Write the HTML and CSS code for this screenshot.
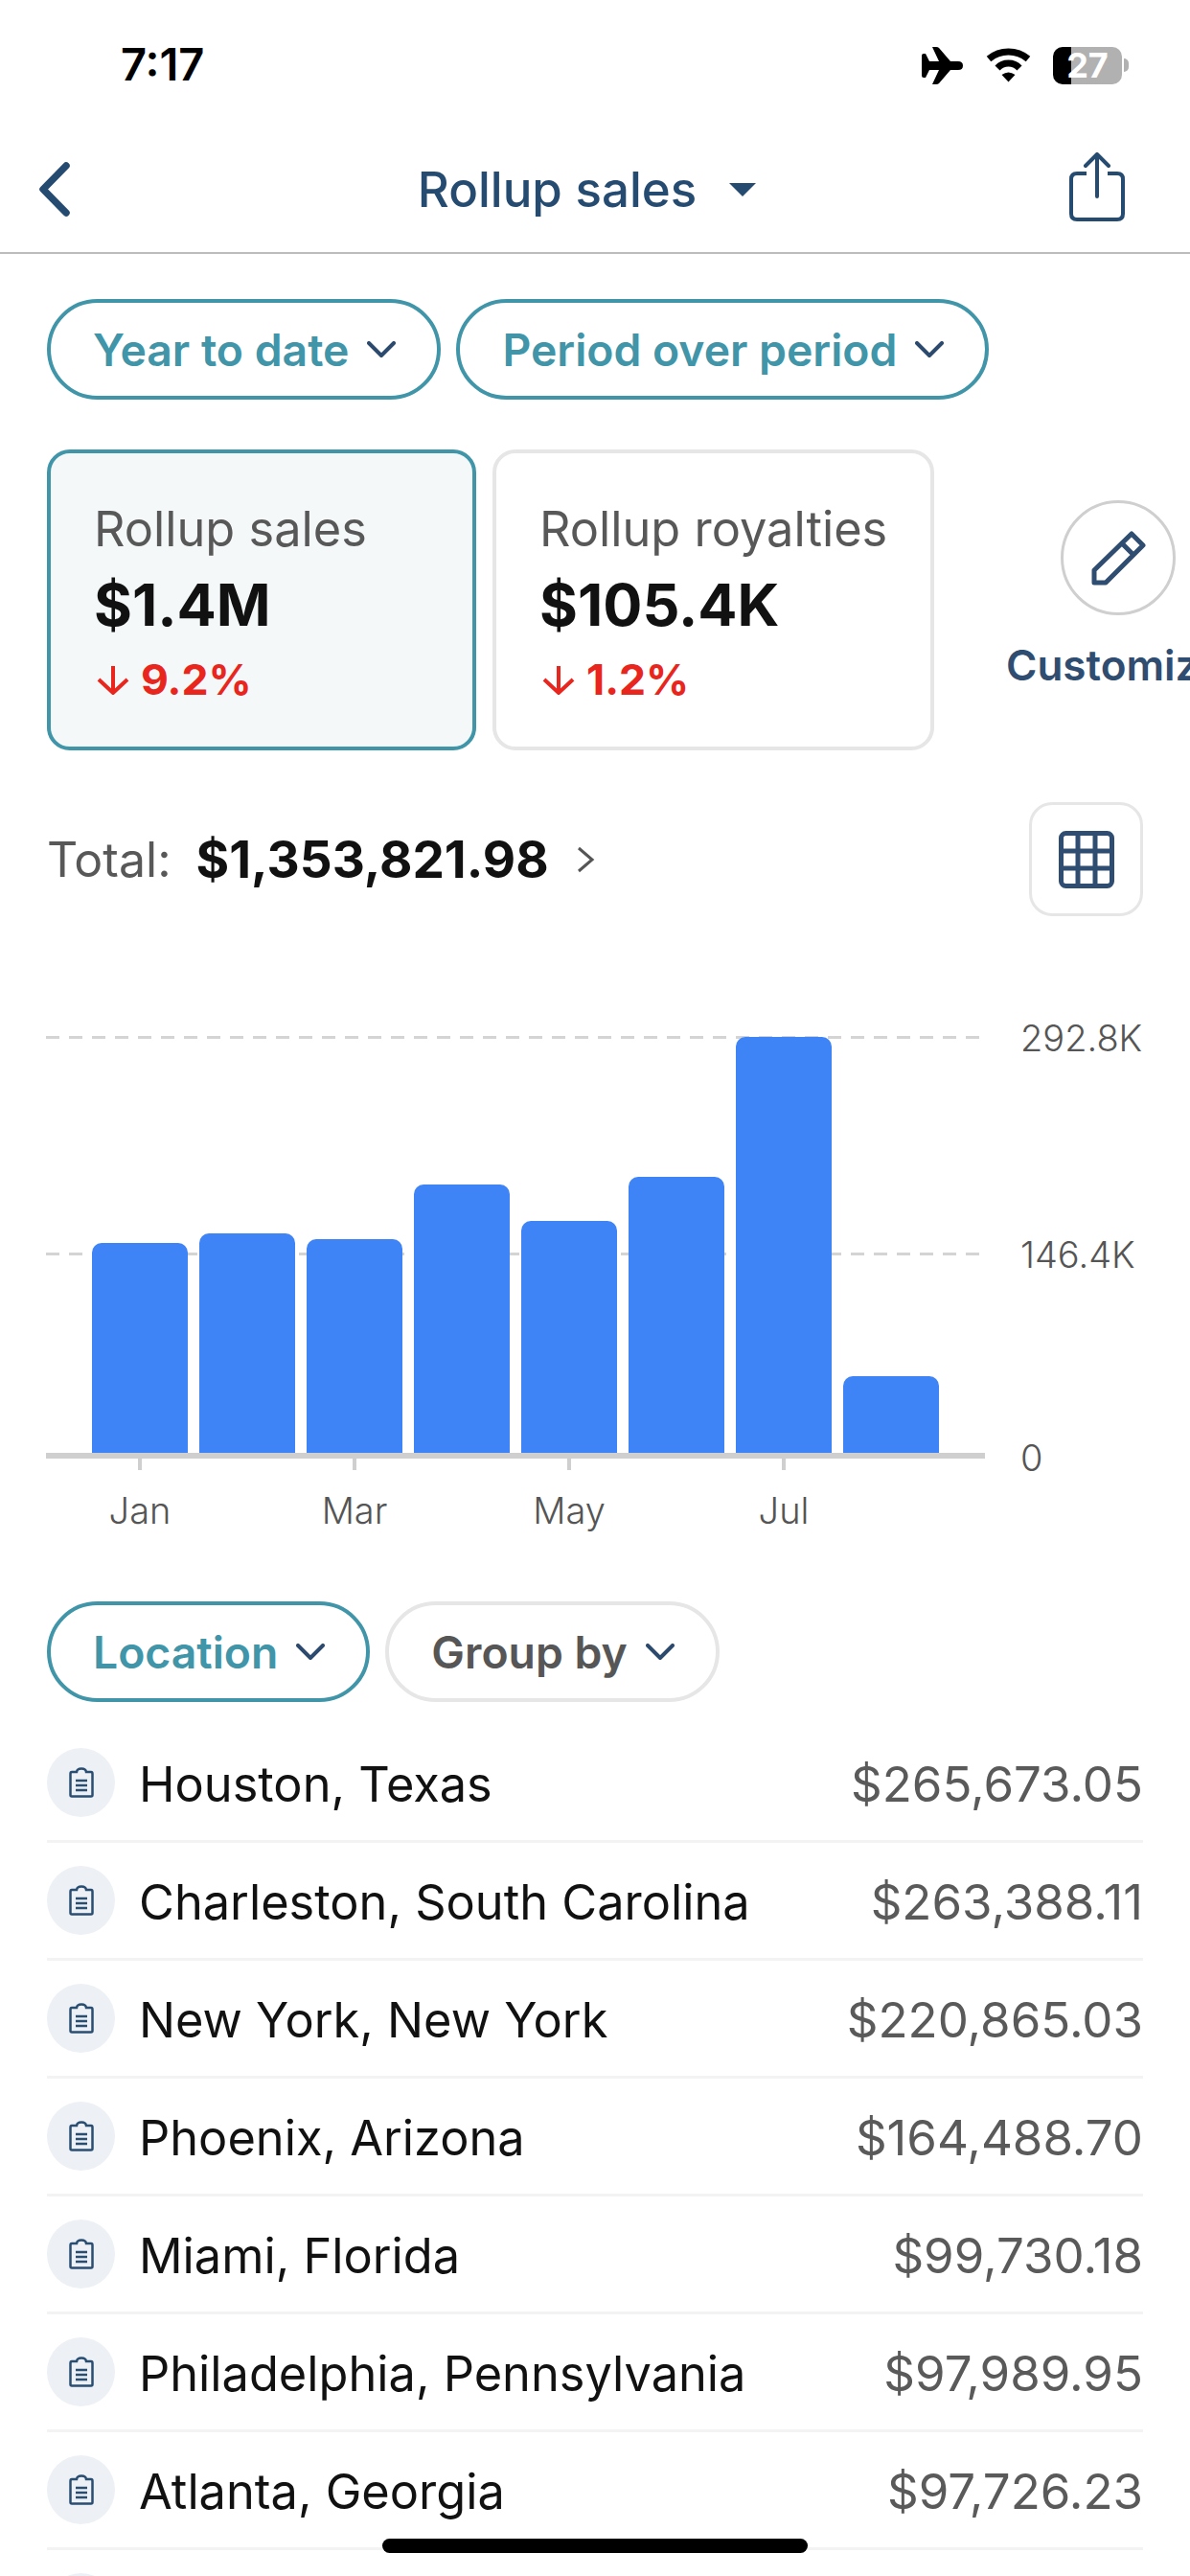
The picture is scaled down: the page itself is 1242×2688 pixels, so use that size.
FILE: index.html
```html
<!DOCTYPE html>
<html>
<head>
    <title>Rollup sales</title>
    <link rel="stylesheet" href="styles.css">
</head>
<body>
<div class="screen">
    <div class="status">
        <div class="time">7:17</div>
        <div class="status-icons">
            <svg class="plane" viewBox="0 0 43 39"><path d="M0 9Q0 7 2 7L4 7L8 15L18 15L11 0L15 0Q17 0 18 1L30 15L38 15Q43 15 43 19.5Q43 24 38 24L30 24L18 38Q17 39 15 39L11 39L18 24L8 24L4 32L2 32Q0 32 0 30Z"/></svg>
            <svg class="wifi" viewBox="0 0 47 36"><path d="M3 11.500A32 32 0 0 1 44 11.500M12 21A16 16 0 0 1 35 21" fill="none" stroke="#000" stroke-width="7"/><path d="M16.500 28Q23.500 23 30.500 28L23.500 35.500Z"/></svg>
            <div class="battery">27</div>
            <div class="battery-tip"></div>
        </div>
    </div>

    <div class="nav">
        <svg class="back" viewBox="0 0 34 58"><path d="M29 4L5 28.500L29 53" fill="none" stroke="#264b70" stroke-width="7.500" stroke-linecap="round" stroke-linejoin="round"/></svg>
        <div class="nav-title">
            Rollup sales
            <span class="caret"></span>
        </div>
        <svg class="share" viewBox="0 0 58 72"><path d="M18 22L8 22Q2 22 2 28L2 64Q2 70 8 70L50 70Q56 70 56 64L56 28Q56 22 50 22L40 22" fill="none" stroke="#264b70" stroke-width="4"/><path d="M29 46L29 3M17 14L29 2L41 14" fill="none" stroke="#264b70" stroke-width="4" stroke-linecap="round" stroke-linejoin="round"/></svg>
    </div>

    <div class="pills top-pills">
        <div class="pill active">Year to date <svg class="chev" viewBox="0 0 30 18"><path d="M2 2L15 15L28 2"/></svg></div>
        <div class="pill active">Period over period <svg class="chev" viewBox="0 0 30 18"><path d="M2 2L15 15L28 2"/></svg></div>
    </div>

    <div class="cards">
        <div class="card selected">
            <div class="card-label">Rollup sales</div>
            <div class="card-value">$1.4M</div>
            <div class="card-delta"><svg class="down" viewBox="0 0 34 32"><path d="M17 2L17 30M2 16L17 30L32 16"/></svg>9.2%</div>
        </div>
        <div class="card second">
            <div class="card-label">Rollup royalties</div>
            <div class="card-value">$105.4K</div>
            <div class="card-delta"><svg class="down" viewBox="0 0 34 32"><path d="M17 2L17 30M2 16L17 30L32 16"/></svg>1.2%</div>
        </div>
        <div class="customize">
            <div class="edit-btn">
                <svg class="pencil" viewBox="0 0 57 57"><path d="M3 41L42 3L54 15L15 54L3 54ZM32 13L44 25"/></svg>
            </div>
            <div class="customize-label">Customize</div>
        </div>
    </div>

    <div class="total-row">
        <span class="total-label">Total:</span>
        <span class="total-value">$1,353,821.98</span>
        <svg class="total-chev" viewBox="0 0 20 30"><path d="M3 3L17 15L3 27"/></svg>
        <div class="table-btn">
            <svg class="grid-icon" viewBox="0 0 58 60"><rect x="2.500" y="2.500" width="53" height="55" rx="5"/><path d="M20 3L20 57M38 3L38 57M3 21L55 21M3 39L55 39"/></svg>
        </div>
    </div>

    <div class="chart">
        <div class="plot">
            <div class="gridline line-top"></div>
            <div class="gridline line-mid"></div>
            <div class="bars">
                <div class="bar" style="height:219px"></div>
                <div class="bar" style="height:229px"></div>
                <div class="bar" style="height:223px"></div>
                <div class="bar" style="height:280px"></div>
                <div class="bar" style="height:242px"></div>
                <div class="bar" style="height:288px"></div>
                <div class="bar" style="height:434px"></div>
                <div class="bar" style="height:80px"></div>
            </div>
            <div class="axis"></div>
            <div class="months">
                <div class="month">Jan</div>
                <div class="month">Mar</div>
                <div class="month">May</div>
                <div class="month">Jul</div>
            </div>
        </div>
        <div class="y-label y-top">292.8K</div>
        <div class="y-label y-mid">146.4K</div>
        <div class="y-label y-zero">0</div>
    </div>

    <div class="pills group-pills">
        <div class="pill active">Location <svg class="chev" viewBox="0 0 30 18"><path d="M2 2L15 15L28 2"/></svg></div>
        <div class="pill plain">Group by <svg class="chev" viewBox="0 0 30 18"><path d="M2 2L15 15L28 2"/></svg></div>
    </div>

    <div class="list">
        <div class="row"><div class="row-icon"><svg class="clip" viewBox="0 0 26 32"><path d="M8 5L3 5Q1.500 5 1.500 7L1.500 29Q1.500 30.500 3 30.500L23 30.500Q24.500 30.500 24.500 29L24.500 7Q24.500 5 23 5L18 5Q17.500 1.500 13 1.500Q8.500 1.500 8 5ZM7 14L19 14M7 19L19 19M7 24L19 24"/></svg></div><div class="row-name">Houston, Texas</div><div class="row-amount">$265,673.05</div></div>
        <div class="row"><div class="row-icon"><svg class="clip" viewBox="0 0 26 32"><path d="M8 5L3 5Q1.500 5 1.500 7L1.500 29Q1.500 30.500 3 30.500L23 30.500Q24.500 30.500 24.500 29L24.500 7Q24.500 5 23 5L18 5Q17.500 1.500 13 1.500Q8.500 1.500 8 5ZM7 14L19 14M7 19L19 19M7 24L19 24"/></svg></div><div class="row-name">Charleston, South Carolina</div><div class="row-amount">$263,388.11</div></div>
        <div class="row"><div class="row-icon"><svg class="clip" viewBox="0 0 26 32"><path d="M8 5L3 5Q1.500 5 1.500 7L1.500 29Q1.500 30.500 3 30.500L23 30.500Q24.500 30.500 24.500 29L24.500 7Q24.500 5 23 5L18 5Q17.500 1.500 13 1.500Q8.500 1.500 8 5ZM7 14L19 14M7 19L19 19M7 24L19 24"/></svg></div><div class="row-name">New York, New York</div><div class="row-amount">$220,865.03</div></div>
        <div class="row"><div class="row-icon"><svg class="clip" viewBox="0 0 26 32"><path d="M8 5L3 5Q1.500 5 1.500 7L1.500 29Q1.500 30.500 3 30.500L23 30.500Q24.500 30.500 24.500 29L24.500 7Q24.500 5 23 5L18 5Q17.500 1.500 13 1.500Q8.500 1.500 8 5ZM7 14L19 14M7 19L19 19M7 24L19 24"/></svg></div><div class="row-name">Phoenix, Arizona</div><div class="row-amount">$164,488.70</div></div>
        <div class="row"><div class="row-icon"><svg class="clip" viewBox="0 0 26 32"><path d="M8 5L3 5Q1.500 5 1.500 7L1.500 29Q1.500 30.500 3 30.500L23 30.500Q24.500 30.500 24.500 29L24.500 7Q24.500 5 23 5L18 5Q17.500 1.500 13 1.500Q8.500 1.500 8 5ZM7 14L19 14M7 19L19 19M7 24L19 24"/></svg></div><div class="row-name">Miami, Florida</div><div class="row-amount">$99,730.18</div></div>
        <div class="row"><div class="row-icon"><svg class="clip" viewBox="0 0 26 32"><path d="M8 5L3 5Q1.500 5 1.500 7L1.500 29Q1.500 30.500 3 30.500L23 30.500Q24.500 30.500 24.500 29L24.500 7Q24.500 5 23 5L18 5Q17.500 1.500 13 1.500Q8.500 1.500 8 5ZM7 14L19 14M7 19L19 19M7 24L19 24"/></svg></div><div class="row-name">Philadelphia, Pennsylvania</div><div class="row-amount">$97,989.95</div></div>
        <div class="row"><div class="row-icon"><svg class="clip" viewBox="0 0 26 32"><path d="M8 5L3 5Q1.500 5 1.500 7L1.500 29Q1.500 30.500 3 30.500L23 30.500Q24.500 30.500 24.500 29L24.500 7Q24.500 5 23 5L18 5Q17.500 1.500 13 1.500Q8.500 1.500 8 5ZM7 14L19 14M7 19L19 19M7 24L19 24"/></svg></div><div class="row-name">Atlanta, Georgia</div><div class="row-amount">$97,726.23</div></div>
        <div class="row"><div class="row-icon"></div></div>
    </div>

    <div class="home-bar"></div>
</div>
</body>
</html>
```

FILE: styles.css
```css
html, body{
    margin: 0;
    padding: 0;
    background: #fff;
}
.screen{
    position: relative;
    width: 1242px;
    height: 2688px;
    overflow: hidden;
    background: #fff;
    font-family: "Inter", "Liberation Sans", sans-serif;
    color: #111;
}

/* status bar */
.status{
    height: 132px;
    display: flex;
    align-items: center;
    justify-content: space-between;
    padding: 4px 64px 0 126px;
    box-sizing: border-box;
}
.time{
    font-size: 47px;
    font-weight: 600;
    color: #000;
    margin-top: -4px;
}
.status-icons{
    display: flex;
    align-items: center;
}
.plane{
    width: 43px;
    height: 39px;
    margin-right: 24px;
}
.wifi{
    width: 47px;
    height: 36px;
    margin-right: 23px;
}
.battery{
    width: 72px;
    height: 39px;
    border-radius: 10px;
    background: linear-gradient(90deg, #000 26.4%, #b1b1b1 26.4%);
    color: #fff;
    font-size: 36px;
    font-weight: 700;
    line-height: 39px;
    text-align: center;
}
.battery-tip{
    width: 5px;
    height: 14px;
    margin-left: 2px;
    background: #b1b1b1;
    border-radius: 0 7px 7px 0;
}

/* nav */
.nav{
    height: 133px;
    display: flex;
    align-items: center;
    justify-content: space-between;
    padding: 0 68px 0 40px;
    box-sizing: border-box;
    border-bottom: 2px solid #bcbcbc;
}
.back{
    width: 34px;
    height: 58px;
}
.nav-title{
    font-size: 51px;
    font-weight: 500;
    color: #264b70;
    display: flex;
    align-items: center;
    gap: 34px;
    margin-left: 35px;
}
.caret{
    width: 0;
    height: 0;
    border-left: 14px solid transparent;
    border-right: 14px solid transparent;
    border-top: 14px solid #264b70;
}
.share{
    width: 58px;
    height: 72px;
    margin-bottom: 6px;
}

/* pills */
.pills{
    display: flex;
    gap: 16px;
    padding: 0 49px;
}
.top-pills{
    margin-top: 47px;
}
.group-pills{
    margin-top: 0;
}
.pill{
    height: 105px;
    box-sizing: border-box;
    padding: 0 43px 0 44px;
    border-radius: 53px;
    border: 4px solid #4095a8;
    display: flex;
    align-items: center;
    gap: 19px;
    font-size: 46.3px;
    font-weight: 600;
    color: #4095a8;
}
.plain{
    border-color: #e6e6e6;
    color: #565656;
}
.chev{
    width: 30px;
    height: 18px;
    fill: none;
    stroke: #2c4a6e;
    stroke-width: 4;
    stroke-linecap: round;
    stroke-linejoin: round;
}

/* metric cards */
.cards{
    display: flex;
    margin-top: 52px;
    padding-left: 49px;
    align-items: flex-start;
}
.card{
    box-sizing: border-box;
    flex-shrink: 0;
    height: 314px;
    width: 448px;
    border: 4px solid #e6e6e6;
    border-radius: 24px;
    padding: 50px 0 0 45px;
}
.selected{
    border-color: #4095a8;
    background: #f4f8f9;
}
.second{
    width: 461px;
    margin-left: 17px;
}
.card-label{
    font-size: 50.5px;
    line-height: 58px;
    color: #585858;
}
.card-value{
    font-size: 61px;
    line-height: 68px;
    font-weight: 700;
    margin-top: 16px;
    color: #111;
}
.card-delta{
    display: flex;
    align-items: center;
    gap: 12px;
    font-size: 44.5px;
    line-height: 54px;
    font-weight: 700;
    color: #e8261d;
    margin-top: 17px;
}
.down{
    width: 34px;
    height: 32px;
    margin-left: 3px;
    fill: none;
    stroke: #e8261d;
    stroke-width: 4;
}
.customize{
    flex-shrink: 0;
    margin-left: 75px;
    width: 200px;
}
.edit-btn{
    box-sizing: border-box;
    width: 120px;
    height: 120px;
    margin: 53px 0 0 57px;
    border: 3px solid #cfcfcf;
    border-radius: 50%;
    display: flex;
    align-items: center;
    justify-content: center;
}
.pencil{
    width: 57px;
    height: 57px;
    fill: none;
    stroke: #2f4d70;
    stroke-width: 5;
    stroke-linejoin: round;
}
.customize-label{
    margin-top: 25px;
    font-size: 44px;
    font-weight: 600;
    color: #2f4d70;
    white-space: nowrap;
}

/* total row */
.total-row{
    display: flex;
    align-items: center;
    margin-top: 54px;
    padding: 0 49px;
    height: 119px;
}
.total-label{
    font-size: 50px;
    color: #585858;
}
.total-value{
    font-size: 53px;
    font-weight: 700;
    margin-left: 26px;
    color: #111;
}
.total-chev{
    width: 20px;
    height: 30px;
    margin-left: 28px;
    fill: none;
    stroke: #555;
    stroke-width: 3;
}
.table-btn{
    box-sizing: border-box;
    margin-left: auto;
    width: 119px;
    height: 119px;
    border: 3px solid #e6e6e6;
    border-radius: 24px;
    display: flex;
    align-items: center;
    justify-content: center;
}
.grid-icon{
    width: 58px;
    height: 60px;
    fill: none;
    stroke: #2f4d70;
    stroke-width: 5;
}

/* chart */
.chart{
    position: relative;
    height: 715px;
}
.plot{
    position: absolute;
    left: 48px;
    top: 0;
    width: 980px;
    height: 100%;
}
.gridline{
    position: absolute;
    left: 0;
    right: 0;
    height: 3px;
    background: repeating-linear-gradient(90deg, #d4d4d4 0 14px, transparent 14px 24px);
}
.line-top{
    top: 125px;
}
.line-mid{
    top: 351px;
}
.bars{
    position: absolute;
    left: 48px;
    top: 0;
    height: 560px;
    display: flex;
    align-items: flex-end;
    gap: 12px;
}
.bar{
    width: 100px;
    background: #3f84f7;
    border-radius: 10px 10px 0 0;
}
.axis{
    position: absolute;
    left: 0;
    right: 0;
    top: 560px;
    height: 6px;
    background: #cfcfcf;
}
.months{
    position: absolute;
    left: 48px;
    top: 566px;
    display: flex;
    gap: 124px;
}
.month{
    width: 100px;
    text-align: center;
    font-size: 38px;
    font-weight: 300;
    color: #555;
    padding-top: 31px;
    background: linear-gradient(#cfcfcf, #cfcfcf) center top / 4px 12px no-repeat;
}
.y-label{
    position: absolute;
    left: 1065px;
    font-size: 38px;
    line-height: 44px;
    font-weight: 300;
    color: #555;
}
.y-top{
    top: 105px;
}
.y-mid{
    top: 331px;
}
.y-zero{
    top: 543px;
}

/* location list */
.list{
    margin-top: 24px;
    padding: 0 49px;
}
.row{
    height: 123px;
    box-sizing: border-box;
    border-bottom: 3px solid #f3f3f3;
    display: flex;
    align-items: center;
}
.row-icon{
    width: 71px;
    height: 72px;
    border-radius: 50%;
    background: #edf0f4;
    display: flex;
    align-items: center;
    justify-content: center;
    flex-shrink: 0;
}
.clip{
    width: 26px;
    height: 32px;
    fill: none;
    stroke: #2a4d72;
    stroke-width: 2.500;
}
.row-name{
    margin-left: 25px;
    padding-top: 3px;
    font-size: 50.5px;
    color: #111;
}
.row-amount{
    margin-left: auto;
    padding-top: 3px;
    font-size: 51px;
    color: #5a5a5a;
}
.home-bar{
    position: absolute;
    left: 399px;
    top: 2649px;
    width: 444px;
    height: 15px;
    border-radius: 8px;
    background: #000;
}
```
